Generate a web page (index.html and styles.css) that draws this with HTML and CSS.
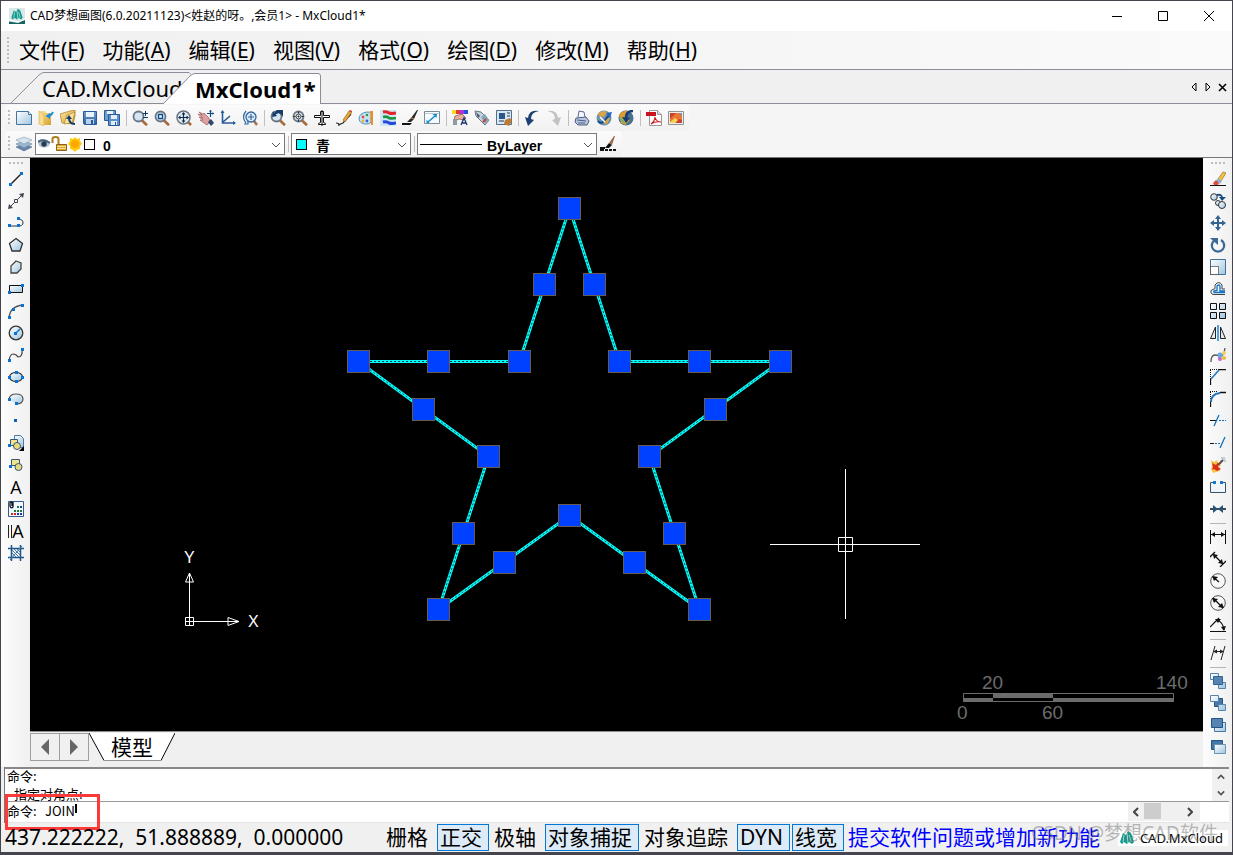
FILE: index.html
```html
<!DOCTYPE html>
<html lang="zh-CN">
<head>
<meta charset="utf-8">
<title>CAD梦想画图 - MxCloud1*</title>
<link rel="stylesheet" href="styles.css">
</head>
<body>
<svg class="defs" aria-hidden="true">
  <defs>
    <linearGradient id="ice" x1="0" y1="0" x2="1" y2="1"><stop offset="0" stop-color="#fff"/><stop offset="1" stop-color="#9fc6e0"/></linearGradient>
    <linearGradient id="gold" x1="0" y1="0" x2="1" y2="1"><stop offset="0" stop-color="#fbe6a0"/><stop offset="1" stop-color="#d9a028"/></linearGradient>
    <linearGradient id="steel" x1="0" y1="0" x2="0" y2="1"><stop offset="0" stop-color="#6f9fd0"/><stop offset="1" stop-color="#2f5f9c"/></linearGradient>
    <symbol id="lens" viewBox="0 0 16 16"><path d="M9.500 10 15 15.200" stroke="#a86a3a" stroke-width="2.600"/><circle cx="6.500" cy="6.500" r="5" fill="#d5e4f0" stroke="#6b7784" stroke-width="1.800"/></symbol>
    <symbol id="logo" viewBox="0 0 16 16"><path d="M1 12 4 3l3 2 2-4 3 2 3 9-2 2-3-2-2 2-3-2-2 2z" fill="#13988c"/><path d="m5 5-1 7m4-9 1 10m1-8 2 7" stroke="#a8ded6" stroke-width="1"/></symbol>
  </defs>
</svg>
<div class="window">
  <header class="titlebar">
    <svg class="app-icon" viewBox="0 0 16 16"><rect width="16" height="16" rx="1" fill="#d9e8e8"/><use href="#logo" width="16" height="13"/><path d="M0 13.500 9 15l7-3v4H0z" fill="#16635f"/><path d="M0 12 9 14l7-3" stroke="#fff" fill="none"/></svg>
    <h1 class="title">CAD梦想画图(6.0.20211123)&lt;姓赵的呀。,会员1&gt; - MxCloud1*</h1>
    <button class="win-btn" aria-label="最小化"><svg viewBox="0 0 12 12"><path d="M1 6.500h10"/></svg></button>
    <button class="win-btn" aria-label="最大化"><svg viewBox="0 0 12 12"><path d="M1.500 1.500h9v9h-9z"/></svg></button>
    <button class="win-btn" aria-label="关闭"><svg viewBox="0 0 12 12"><path d="m1 1 10 10M11 1 1 11"/></svg></button>
  </header>

  <nav class="menubar">
    <span class="grip tall"></span>
    <button>文件(<u>F</u>)</button><button>功能(<u>A</u>)</button><button>编辑(<u>E</u>)</button><button>视图(<u>V</u>)</button><button>格式(<u>O</u>)</button><button>绘图(<u>D</u>)</button><button>修改(<u>M</u>)</button><button>帮助(<u>H</u>)</button>
  </nav>

  <div class="doc-tabs">
    <button class="doc-tab"><svg viewBox="0 0 180 31" preserveAspectRatio="none"><path d="M0 31 28 3q3-2.500 5-2.500h145l2 2"/></svg><span>CAD.MxCloud</span></button>
    <button class="doc-tab active"><svg viewBox="0 0 158 31" preserveAspectRatio="none"><path d="M0 31 27 3q3-2.500 5-2.500h123q2.500 0 2.500 2.500v28" fill="#fff"/></svg><span>MxCloud1*</span></button>
    <span class="tab-line"></span>
    <button class="tab-ctl" aria-label="上一个"><svg viewBox="0 0 10 10"><path d="M7 1v8L3 5z" fill="none" stroke="#000"/></svg></button>
    <button class="tab-ctl" aria-label="下一个"><svg viewBox="0 0 10 10"><path d="M3 1v8l4-4z" fill="none" stroke="#000"/></svg></button>
    <button class="tab-ctl" aria-label="关闭标签"><svg viewBox="0 0 10 10"><path d="m2 2 7 7M9 2 2 9" stroke="#000" stroke-width="1.600"/></svg></button>
  </div>

  <div class="bars">
    <div class="toolbar">
      <span class="grip"></span>
      <button class="tool" aria-label="新建"><svg viewBox="0 0 16 16"><path d="M.5 1.500h12l3 3v10H.5z" fill="url(#ice)" stroke="#41749f"/><path d="M12.500 1.500v3h3" fill="#fff" stroke="#41749f"/></svg></button>
      <button class="tool" aria-label="打开"><svg viewBox="0 0 16 16"><path d="M1 1h6l1 2h5v12H3z" fill="url(#gold)"/><path d="m1 1 5 4v11l-5-2z" fill="#f6dc8c" stroke="#d6b050" stroke-width=".6"/><path d="M15 2q-2 4-5 4" stroke="#1d90d8" stroke-width="2" fill="none"/><path d="M7.500 6 12 3v6z" fill="#1d90d8"/></svg></button>
      <button class="tool" aria-label="打开云图"><svg viewBox="0 0 16 16"><path d="m0 4 10-3 5-1v6l-2 8-11-1z" fill="url(#gold)" stroke="#a87820" stroke-width=".7"/><path d="M4 14 7 5l8-3-3 11z" fill="#f8e29a" stroke="#a87820" stroke-width=".6"/><path d="M15 14q-6 0-6-6" fill="none" stroke="#123d70" stroke-width="2"/><path d="m6 9 3-4 3 4z" fill="#123d70"/></svg></button>
      <button class="tool" aria-label="保存"><svg viewBox="0 0 16 16"><path d="M1.500 1.500h13v13h-12l-1-1z" fill="url(#steel)" stroke="#28599a"/><path d="M4 2h8v5H4z" fill="#e8f2fa"/><path d="M4 9h8v5H4z" fill="#b8d4ec"/><path d="M9 10h2v4H9z" fill="#28599a"/></svg></button>
      <button class="tool" aria-label="另存为"><svg viewBox="0 0 16 16"><path d="M.5.5h11v10H.5z" fill="#6f9fd0" stroke="#28599a"/><path d="M3 1h6v3H3z" fill="#e8f2fa"/><path d="M4.500 4.500h11v11h-11z" fill="#5f90c8" stroke="#28599a"/><path d="M7 5h6v4H7zm0 6h6v4H7z" fill="#e0eefa"/><path d="M11 12h1v3h-1z" fill="#28599a"/></svg></button>
      <span class="sep"></span>
      <button class="tool" aria-label="缩放"><svg viewBox="0 0 16 16"><use href="#lens"/><path d="M11 3.500h5M13.500 1v5M11 7.500h5" stroke="#0c3c6c"/></svg></button>
      <button class="tool" aria-label="窗口缩放"><svg viewBox="0 0 16 16"><use href="#lens"/><path d="M4.500 4.500h4v4h-4z" fill="#eaf5ff" stroke="#0d4a88" stroke-width="1.300"/></svg></button>
      <button class="tool" aria-label="全部缩放"><svg viewBox="0 0 16 16"><path d="m12 12 3 3" stroke="#a86a3a" stroke-width="2.600"/><circle cx="7.500" cy="7.500" r="6.500" fill="#e6eef4" stroke="#6c7580" stroke-width="1.500"/><path d="M7.500 3v9M3 7.500h9" stroke="#0c2c50" stroke-width="1.200"/><path d="m7.500 2 2 2.500h-4zM7.500 13l2-2.500h-4zM2 7.500l2.500-2v4zm11 0-2.500-2v4z" fill="#0c2c50"/></svg></button>
      <button class="tool" aria-label="平移"><svg viewBox="0 0 16 16"><path d="m1 2 4 2 1-1 5 5 1 4-3 3-3-2-4-3 3 0-4-3 4 1-5-4 4 1z" fill="#dda0a0" stroke="#9c5c60" stroke-width=".7"/><path d="m10 12 3-3 3 4-3 3z" fill="#30476a"/><path d="M12.500 0v7M9 3.500h7" stroke="#174a80" stroke-width="1.200"/><path d="m12.500 0 1.500 1.500h-3zM16 3.500 14.500 5V2z" fill="#174a80"/></svg></button>
      <button class="tool" aria-label="坐标"><svg viewBox="0 0 16 16"><path d="M2.500 1v12H15M3 12l7-6" fill="none" stroke="#2a5c98" stroke-width="1.600"/><path d="m2.500 0 2 3h-4zM16 13l-3-2v4z" fill="#2a5c98"/></svg></button>
      <button class="tool" aria-label="动态缩放"><svg viewBox="0 0 16 16"><path d="m12 11 3 4" stroke="#a86a3a" stroke-width="2.400"/><circle cx="9" cy="7" r="5" fill="#d8ecfa" stroke="#31679f" stroke-width="1.300"/><path d="M4 1Q-1 7 4 13M2 14h4v-3M9 4v6M6 7h6" fill="none" stroke="#31679f" stroke-width="1.200"/></svg></button>
      <span class="sep"></span>
      <button class="tool" aria-label="上一视图"><svg viewBox="0 0 16 16"><use href="#lens"/><path d="M4 6q5-6 9 1v-7q-5-2-8 2" fill="#173c6c"/><path d="m2 7 1-6 4 5z" fill="#173c6c"/></svg></button>
      <button class="tool" aria-label="范围缩放"><svg viewBox="0 0 16 16"><use href="#lens"/><circle cx="6.500" cy="6.500" r="2.500" fill="#eee" stroke="#444"/><path d="M6 6h1v1H6zM1.500 6.500h2m6 0h2m-5-5v2m0 6v2" fill="#111" stroke="#222"/></svg></button>
      <button class="tool" aria-label="捕捉"><svg viewBox="0 0 16 16"><path d="M6.500 1.500h3v4h6v2h-6v5l2 1v1h-7v-1l2-1v-5h-6v-2h6z" fill="#fff" stroke="#111"/><path d="M8 0v16" stroke="#111"/></svg></button>
      <button class="tool" aria-label="画笔"><svg viewBox="0 0 16 16"><path d="M0 13q3 0 3 2 1-1 4-2l8-9" fill="none" stroke="#222" stroke-width="1.200"/><path d="m7 10 6-9 3 1-7 10z" fill="#e9a43a" stroke="#8c5a14" stroke-width=".6"/><path d="m13 1 1-1 2 1v1z" fill="#c9302c"/></svg></button>
      <button class="tool" aria-label="调色板"><svg viewBox="0 0 16 16"><path d="M1 9q0-6 8-7 6 0 5 4-2 1-1 4 1 4-5 4-6 0-7-5z" fill="#c6e3f4" stroke="#4c93bf"/><circle cx="5" cy="7" r="1.400" fill="#e34b3e"/><circle cx="9" cy="5" r="1.300" fill="#2b9b42"/><circle cx="5" cy="11" r="1.400" fill="#e7b52d"/><circle cx="9" cy="11" r="1.400" fill="#3c5ecc"/><path d="M12 1h3v14h-2z" fill="#e69130"/></svg></button>
      <button class="tool" aria-label="线型颜色"><svg viewBox="0 0 16 16"><path d="M0 0h16v16H0z" fill="#cfe6f3"/><path d="M3 2q4-1 6 1 3 1 7 0" stroke="#e3222e" stroke-width="3" fill="none"/><path d="M3 7q4-1 6 1 3 1 7 0" stroke="#18933e" stroke-width="2.600" fill="none"/><path d="M3 12q4-1 6 1 3 1 7 0" stroke="#2448d8" stroke-width="3" fill="none"/></svg></button>
      <button class="tool" aria-label="线宽"><svg viewBox="0 0 16 16"><path d="M0 13h10l-2 2H0z" fill="#111"/><path d="m5 12 4-4 6-8h1l-4 9-3 3z" fill="#2b2929"/><path d="m9 8 3 1" stroke="#c48a58"/></svg></button>
      <button class="tool" aria-label="全屏"><svg viewBox="0 0 16 16"><path d="M.5 1.500h15v12H.5z" fill="#f5fbff" stroke="#7b8c98"/><path d="M1 3.500h14" stroke="#c0ccd4"/><path d="m4 12 7-6" stroke="#168bd0" stroke-width="1.600"/><path d="m13 4-.5 4-4-4zM2.500 13V9.500l3 3.500z" fill="#168bd0"/></svg></button>
      <span class="sep"></span>
      <button class="tool" aria-label="特性"><svg viewBox="0 0 16 16"><path d="M0 0h4v4H0z" fill="#f4dc27"/><path d="M4 0h4v4H4z" fill="#e63346"/><path d="M8 0h4v4H8z" fill="#a937d0"/><path d="M12 0h4v4h-4z" fill="#2850e0"/><path d="m3 6 7-2 4 4-2 2-5-1-5 2z" fill="#e9ae9c" stroke="#7c4544" stroke-width=".7"/><path d="M1 9h4v6H1z" fill="#8e99a6"/><path d="m9 15 3-7 3 7m-5-2h4" fill="none" stroke="#1b356c" stroke-width="1.300"/></svg></button>
      <button class="tool" aria-label="标记"><svg viewBox="0 0 16 16"><path d="m1 1 6 1 8 8-4 5-9-9z" fill="#c6d5df" stroke="#687783"/><path d="m2 2 4 4-2 2z" fill="#3f4f5e"/><path d="m7 7 4-3 4 6-4 4z" fill="#87a4b9"/><path d="m9 12 3-3" stroke="#ca423a" stroke-width="2"/></svg></button>
      <button class="tool" aria-label="格式刷"><svg viewBox="0 0 16 16"><path d="M.5.5h15v14H.5z" fill="#dae6ef" stroke="#526f8c"/><path d="M3 3h6v6H3z" fill="#285789"/><path d="M11 3h3M11 6h3M3 11h5" stroke="#243a58"/><path d="m9 10 5-2 2 3-3 5-5-2z" fill="#bd7a35"/></svg></button>
      <span class="sep"></span>
      <button class="tool" aria-label="撤销"><svg viewBox="0 0 16 16"><path d="M15 1Q5-1 4 8L1 7l3 9 6-6-3-1q0-7 8-8z" fill="#1a4074"/></svg></button>
      <button class="tool" aria-label="重做"><svg viewBox="0 0 16 16"><path d="M1 1q10-2 11 7l3-1-3 9-6-6 3-1Q9 2 1 1z" fill="#c0c3c6"/></svg></button>
      <span class="sep"></span>
      <button class="tool" aria-label="打印"><svg viewBox="0 0 16 16"><path d="m4 7 1-6 5 1 1 5" fill="#f4f6ff" stroke="#586a96"/><path d="m2 8 10-1 3 4-2 4H4l-3-3z" fill="#bac6df" stroke="#4c5c83"/><path d="m3 10 9 1m-8 2h7" stroke="#4c5c83"/></svg></button>
      <button class="tool" aria-label="网络上传"><svg viewBox="0 0 16 16"><circle cx="8" cy="8" r="7.500" fill="#6c92ad"/><path d="M2 4q5-5 9-2L8 7 3 6zm6 5 6-1-3 6-4-1z" fill="#dca443"/><path d="M2 11q3 4 7-1l5-6" stroke="#104a94" stroke-width="2" fill="none"/><path d="m10 3 6-1-2 6z" fill="#246ac0"/><path d="m4 7 5 5" stroke="#fff" stroke-width="1.500"/></svg></button>
      <button class="tool" aria-label="网络下载"><svg viewBox="0 0 16 16"><circle cx="8" cy="8" r="7.500" fill="#46718f"/><path d="M1 5q4-5 9-4L7 7l5 3-5 5-4-2z" fill="#df9b2d"/><path d="M15 1Q8 1 8 8" stroke="#143e75" stroke-width="2.500" fill="none"/><path d="m4 7 8 1-4 5z" fill="#143e75"/><path d="m2 8 5 5" stroke="#76b17c" stroke-width="2"/></svg></button>
      <span class="sep"></span>
      <button class="tool" aria-label="导出PDF"><svg viewBox="0 0 16 16"><path d="M3.500.5h8l4 4v11h-12z" fill="#fff" stroke="#999"/><path d="M11.500.5v4h4" fill="#ddd" stroke="#999"/><path d="M0 2h10v4H0z" fill="#c8141c"/><path d="M5 14q4-3 4-7 1 5 6 5-6-1-10 2z" fill="none" stroke="#d31920" stroke-width="1.200"/></svg></button>
      <button class="tool" aria-label="导出图片"><svg viewBox="0 0 16 16"><path d="M.5 1.500h15v13H.5z" fill="#eee" stroke="#929292"/><path d="M2 3h12v10H2z" fill="#e97632"/><path d="m2 9 6-6H2zm6 4 2-4 4 1v3z" fill="#c44331"/><path d="m2 12 5-4 3 2-3 3H2z" fill="#f6d25b"/><path d="M11 3h3v3z" fill="#6695d1"/></svg></button>
    </div>
    <div class="toolbar">
      <span class="grip"></span>
      <button class="tool" aria-label="图层"><svg viewBox="0 0 16 16"><path d="m0 11 8-3 8 3-8 4z" fill="#6687ad" stroke="#415f83" stroke-width=".5"/><path d="m0 8 8-3 8 3-8 4z" fill="#9db7d0" stroke="#55708d" stroke-width=".5"/><path d="m0 4 8-3 8 3-8 4z" fill="#d7e4ef" stroke="#6e8aa7" stroke-width=".5"/></svg></button>
      <div class="combo layer">
        <span class="combo-icons"><svg viewBox="0 0 52 16" width="52" height="16"><path d="M0 5q5-5 12 1l-1 4q-5 3-10 0z" fill="#b4c2d0"/><path d="M0 6q5-4 12 1" fill="none" stroke="#47617a" stroke-width="2"/><circle cx="6" cy="8" r="2.700" fill="#263c52"/><path d="M14.500 7V3q0-2 3-2t3 2v5" fill="none" stroke="#ae7b1d" stroke-width="2"/><path d="M18.500 8.500h10v6h-10z" fill="#e1a833" stroke="#8a6116"/><path d="M19 10.500h9M19 12.500h9" stroke="#fae095"/><path d="m37 1 2 2 3-1v3l2 3-2 2v3l-3 1-2 2-2-2-3-1v-3l-2-2 2-3V2l3 1z" fill="#ffcc12"/><circle cx="37" cy="8" r="4.300" fill="#ffa800"/></svg><i class="swatch"></i></span>
        <select aria-label="图层"><option>0</option></select>
        <svg class="chev" viewBox="0 0 10 6"><path d="m1 1 4 4 4-4"/></svg>
      </div>
      <span class="sep"></span>
      <div class="combo color">
        <span class="combo-icons"><i class="swatch cyan"></i></span>
        <select aria-label="颜色"><option>青</option></select>
        <svg class="chev" viewBox="0 0 10 6"><path d="m1 1 4 4 4-4"/></svg>
      </div>
      <span class="sep"></span>
      <div class="combo line">
        <span class="combo-icons"><i class="sample"></i></span>
        <select aria-label="线型"><option>ByLayer</option></select>
        <svg class="chev" viewBox="0 0 10 6"><path d="m1 1 4 4 4-4"/></svg>
      </div>
      <button class="tool" aria-label="线型管理"><svg viewBox="0 0 16 16"><path d="M0 14h4m1 0h3m1 0h3m1 0h3M0 12h5" stroke="#111" stroke-width="2"/><path d="m5 12 4-5 3 2-3 3z" fill="#111"/><path d="m9 7 5-7h1l-3 9z" fill="#9c6a48"/></svg></button>
    </div>
  </div>

  <main class="workspace">
    <div class="sidebar">
      <span class="grip flat"></span>
      <button class="tool" aria-label="直线"><svg viewBox="0 0 16 16"><path d="M2 14 14 2" stroke="#222" stroke-width="1.500"/><path d="M1 12h3v3H1zM12 1h3v3h-3z" fill="#0a72d0"/></svg></button>
      <button class="tool" aria-label="构造线"><svg viewBox="0 0 16 16"><path d="M2 14 14 2" stroke="#444"/><path d="m16 0-5 1 4 4zM0 16l5-1-4-4z" fill="#445"/><path d="M6.500 6.500h3v3h-3z" fill="#fff" stroke="#445"/></svg></button>
      <button class="tool" aria-label="多段线"><svg viewBox="0 0 16 16"><path d="M1 11h9M10 4q5 0 5 4 0 3-5 3" fill="none" stroke="#333"/><path d="M0 9h3v3H0zM9 9h3v3H9zM9 2h3v3H9z" fill="#0a72d0"/></svg></button>
      <button class="tool" aria-label="正多边形"><svg viewBox="0 0 16 16"><path d="m8 1.500 6.500 5-2.500 7.500H4L1.500 6.500z" fill="url(#ice)" stroke="#333" stroke-width="1.300"/></svg></button>
      <button class="tool" aria-label="多边形"><svg viewBox="0 0 16 16"><path d="m8 2 5 2v6l-4 4H3V7z" fill="url(#ice)" stroke="#444" stroke-width="1.300"/></svg></button>
      <button class="tool" aria-label="矩形"><svg viewBox="0 0 16 16"><path d="M1.500 4.500h13v7h-13z" fill="url(#ice)" stroke="#111"/><path d="M0 10h3v3H0zM13 3h3v3h-3z" fill="#0a72d0"/></svg></button>
      <button class="tool" aria-label="圆弧"><svg viewBox="0 0 16 16"><path d="M1 15Q2 3 15 2" fill="none" stroke="#555" stroke-width="1.300"/><path d="M0 13h3v3H0zM4 5h3v3H4zM13 1h3v3h-3z" fill="#0a72d0"/></svg></button>
      <button class="tool" aria-label="圆"><svg viewBox="0 0 16 16"><circle cx="8" cy="8" r="6.800" fill="url(#ice)" stroke="#333" stroke-width="1.300"/><path d="m8 8 4-4" stroke="#0a72d0" stroke-width="1.500"/><path d="M6 7h3v3H6z" fill="#0a72d0"/></svg></button>
      <button class="tool" aria-label="样条曲线"><svg viewBox="0 0 16 16"><path d="M1 14Q2 7 5 7t5 3q5 0 4-8" fill="none" stroke="#444" stroke-width="1.200"/><path d="M0 12h3v3H0zM13 1h3v3h-3z" fill="#0a72d0"/></svg></button>
      <button class="tool" aria-label="椭圆"><svg viewBox="0 0 16 16"><ellipse cx="8" cy="8" rx="6.500" ry="4.500" fill="url(#ice)" stroke="#333" stroke-width="1.200"/><path d="M0 7h3v3H0zM13 7h3v3h-3zM7 2h3v3H7zM7 11h3v3H7z" fill="#0a72d0"/></svg></button>
      <button class="tool" aria-label="椭圆弧"><svg viewBox="0 0 16 16"><path d="M1 8q1-5 7-5 7 0 7 5t-7 5" fill="url(#ice)" stroke="#555" stroke-width="1.200"/><path d="M0 7h3v3H0zM7 11h3v3H7z" fill="#0a72d0"/></svg></button>
      <button class="tool" aria-label="点"><svg viewBox="0 0 16 16"><path d="M6 6h3v3H6z" fill="#0a62b0"/></svg></button>
      <button class="tool" aria-label="插入块"><svg viewBox="0 0 16 16"><path d="M6.500.5h6l3 3v9h-9z" fill="url(#ice)" stroke="#4d7ba4"/><path d="M2.500 4.500h7v6h-7z" fill="#f3e389" stroke="#31587f"/><circle cx="9" cy="11" r="3.500" fill="#eadc78" stroke="#31587f"/><path d="M0 9h3v3H0z" fill="#0a72d0"/><path d="M16 11v5h-5z" fill="#000"/></svg></button>
      <button class="tool" aria-label="创建块"><svg viewBox="0 0 16 16"><path d="M3.500 2.500h8v6h-8z" fill="#f3e389" stroke="#31587f"/><circle cx="10.500" cy="10" r="3.500" fill="#e7db79" stroke="#31587f"/><path d="M1 8h3v3H1z" fill="#0a72d0"/></svg></button>
      <button class="tool letter" aria-label="文字">A</button>
      <button class="tool" aria-label="图案填充"><svg viewBox="0 0 16 16"><path d="M.5.5h15v15H.5z" fill="#f2f8ff" stroke="#315e91"/><path d="M6 9h2v2H6zM9 5h2v2H9zM9 9h2v2H9zM12 9h2v2h-2z" fill="#217b38"/><path d="M3 12h2v2H3zM6 12h2v2H6z" fill="#cf2427"/><path d="M9 12h2v2H9zM12 12h2v2h-2zM12 5h2v2h-2z" fill="#2436a5"/><path d="M5 1v5q-2 2-3-1V2q1-2 2 0v3" fill="none" stroke="#111" stroke-width="1.300"/></svg></button>
      <button class="tool letter barred" aria-label="单行文字"><i class="textbars"></i>A</button>
      <button class="tool" aria-label="面域"><svg viewBox="0 0 16 16"><path d="M3.500 0v16M12.500 0v16M0 3.500h16M0 12.500h16" stroke="#225688" stroke-width="1.500"/><path d="m4 5 7 7M6 4l6 6M4 8l4 4M9 4l3 3M2 15 14 1" stroke="#3e79ad"/></svg></button>
    </div>

    <section class="center">
      <svg class="canvas" viewBox="30 158 1173 573" role="img" aria-label="五角星图形">
        <path class="star" d="M569.500 208.500 619.500 361.500H780.500L649.500 456.500 699.500 609.500 569.500 515.500 438.500 609.500 488.500 456.500 358.500 361.500H519.500Z"/>
        <path class="star-dots" d="M569.500 208.500 619.500 361.500H780.500L649.500 456.500 699.500 609.500 569.500 515.500 438.500 609.500 488.500 456.500 358.500 361.500H519.500Z"/>
        <g class="handles">
          <rect x="558.500" y="197.500" width="22" height="22"/><rect x="533.500" y="273.500" width="22" height="22"/><rect x="583.500" y="273.500" width="22" height="22"/>
          <rect x="347.500" y="350.500" width="22" height="22"/><rect x="427.500" y="350.500" width="22" height="22"/><rect x="508.500" y="350.500" width="22" height="22"/>
          <rect x="608.500" y="350.500" width="22" height="22"/><rect x="688.500" y="350.500" width="22" height="22"/><rect x="769.500" y="350.500" width="22" height="22"/>
          <rect x="412.500" y="398.500" width="22" height="22"/><rect x="704.500" y="398.500" width="22" height="22"/><rect x="477.500" y="445.500" width="22" height="22"/><rect x="638.500" y="445.500" width="22" height="22"/>
          <rect x="452.500" y="522.500" width="22" height="22"/><rect x="663.500" y="522.500" width="22" height="22"/><rect x="558.500" y="504.500" width="22" height="22"/>
          <rect x="493.500" y="551.500" width="22" height="22"/><rect x="623.500" y="551.500" width="22" height="22"/><rect x="427.500" y="598.500" width="22" height="22"/><rect x="688.500" y="598.500" width="22" height="22"/>
        </g>
        <path class="thin" d="M845.500 469v150M770 544.500h150M838.500 537.500h14v14h-14zM189.500 573v53M185 621.500h54M185.500 617.500h8v8h-8zM189.500 573l-4 9h8zM239 621.500l-11-4v8z"/>
        <text class="axis" x="184" y="563">Y</text><text class="axis" x="248" y="627">X</text>
        <g class="scale"><path d="M963.500 693.500h210v8h-210z" fill="none" stroke="#6c6c6c"/><path d="M993 693h60v5h-60zM963 698h30v4h-30zM1053 698h121v4h-121z"/>
        <text x="982" y="689">20</text><text x="1156" y="689">140</text><text x="957" y="719">0</text><text x="1042" y="719">60</text></g>
      </svg>
      <div class="sheet-tabs">
        <button class="nav" aria-label="上一页"><svg viewBox="0 0 10 16"><path d="M9 0v16L1 8z"/></svg></button>
        <button class="nav" aria-label="下一页"><svg viewBox="0 0 10 16"><path d="M1 0v16l8-8z"/></svg></button>
        <button class="sheet"><svg viewBox="0 0 86 29" preserveAspectRatio="none"><path d="m0 0 15 28.500h57L86 0" fill="#fff" stroke="#000"/><path d="M15 28.500h57" stroke="#999"/></svg><span>模型</span></button>
      </div>
    </section>

    <div class="sidebar right">
      <span class="grip flat"></span>
      <button class="tool" aria-label="删除"><svg viewBox="0 0 16 16"><path d="M0 14.500h16" stroke="#111"/><path d="m8 8 5-7 3 1-5 8z" fill="#f5c33d" stroke="#846018" stroke-width=".6"/><path d="m6 10 2-3 4 3-2 3z" fill="#8fb4d0"/><path d="m3 12 3-3 3 3-1 2H4z" fill="#df4a42"/></svg></button>
      <button class="tool" aria-label="复制"><svg viewBox="0 0 16 16"><circle cx="4" cy="4" r="3.300" fill="url(#ice)" stroke="#333"/><circle cx="8" cy="10" r="2.500" fill="url(#ice)" stroke="#333"/><circle cx="12" cy="12" r="3.500" fill="url(#ice)" stroke="#333"/><path d="M7 2q5-1 5 3" fill="none" stroke="#174f85" stroke-width="2"/><path d="M9 4h7l-4 4z" fill="#174f85"/></svg></button>
      <button class="tool" aria-label="移动"><svg viewBox="0 0 16 16"><path d="M8 2v12M2 8h12" stroke="#346592" stroke-width="2"/><path d="m8 0 3 4H5zM8 16l3-4H5zM0 8l4-3v6zm16 0-4-3v6z" fill="#346592"/></svg></button>
      <button class="tool" aria-label="旋转"><svg viewBox="0 0 16 16"><path d="M5 3a6.200 6.200 0 1 0 6 0" fill="none" stroke="#3d6996" stroke-width="2.300"/><path d="M0 1h8v7z" fill="#3d6996"/></svg></button>
      <button class="tool" aria-label="缩放对象"><svg viewBox="0 0 16 16"><path d="M.5 6V.5h15v15H.5z" fill="url(#ice)" stroke="#407399"/><path d="M.5 7.500h8v8h-8z" fill="#fff" stroke="#111" stroke-dasharray="1 1"/></svg></button>
      <button class="tool" aria-label="偏移"><svg viewBox="0 0 16 16"><path d="M15 13.500H3q-3-1-2-4l4-2V4q4-5 7 0v4h3" fill="none" stroke="#444"/><path d="M15 11.500H4q-1-2 2-2h1V5q2-2 3 0v5h5" fill="none" stroke="#1974c8" stroke-width="1.300"/></svg></button>
      <button class="tool" aria-label="阵列"><svg viewBox="0 0 16 16"><path d="M.5.500h6v6h-6zM9.500.500h6v6h-6zM.5 9.500h6v6h-6zM9.500 9.500h6v6h-6z" fill="url(#ice)" stroke="#111"/></svg></button>
      <button class="tool" aria-label="镜像"><svg viewBox="0 0 16 16"><path d="M5.500 2v11.500h-5zM10.500 2v11.500h5z" fill="#e3ebf0" stroke="#222"/><path d="M8 0v16" stroke="#1684dd" stroke-width="1.500"/></svg></button>
      <button class="tool" aria-label="编辑曲线"><svg viewBox="0 0 16 16"><path d="M1 15q0-7 4-7t4 2q5 0 6-9" fill="none" stroke="#555" stroke-width="1.300"/><circle cx="10" cy="8" r="2.500" fill="#6aa8e0"/><circle cx="10" cy="12" r="2" fill="#bf6ad0"/><circle cx="14" cy="11" r="2" fill="#ebbd3c"/><circle cx="14" cy="6" r="2" fill="#f2ce69"/></svg></button>
      <button class="tool" aria-label="倒角"><svg viewBox="0 0 16 16"><path d="M0 .500h8M.5 1v9" stroke="#111" stroke-dasharray="1 1"/><path d="M8 .500h8M.5 10v6" stroke="#111" stroke-width="1.300"/><path d="m1 10 8-9" stroke="#2274bd" stroke-width="1.500"/></svg></button>
      <button class="tool" aria-label="圆角"><svg viewBox="0 0 16 16"><path d="M0 .500h8M.5 1v8" stroke="#111" stroke-dasharray="1 1"/><path d="M10 1.500h6M.5 10v6" stroke="#111" stroke-width="1.300"/><path d="M1 11q0-8 9-9" fill="none" stroke="#2274bd" stroke-width="2"/></svg></button>
      <button class="tool" aria-label="修剪"><svg viewBox="0 0 16 16"><path d="M0 7.500h6" stroke="#111"/><path d="M9 7.500h7" stroke="#1470b7" stroke-dasharray="2 1"/><path d="m4 13 5-11" stroke="#1470b7" stroke-width="1.300"/></svg></button>
      <button class="tool" aria-label="延伸"><svg viewBox="0 0 16 16"><path d="M0 8.500h4" stroke="#111"/><path d="M5 8.500h6" stroke="#1470b7" stroke-dasharray="2 1"/><path d="m10 13 5-11" stroke="#1470b7" stroke-width="1.300"/></svg></button>
      <button class="tool" aria-label="分解"><svg viewBox="0 0 16 16"><path d="m1 3 3 2 3-2 1 4 3 1-2 3 1 3-4 1-3 1-2-4 1-3z" fill="#f8c542"/><path d="m2 6 4 2 2-3v5l3 2-4 2-3-2-2 1 1-3z" fill="#dc2b23"/><path d="m8 8 5-5" stroke="#634139" stroke-width="2"/><path d="M11 1h2m1 3h2M10 4h1m3-4v3" stroke="#8fa9bd"/></svg></button>
      <button class="tool" aria-label="打断"><svg viewBox="0 0 16 16"><path d="M4 3.500H.5v10h15v-10H12" fill="#f0f5f9" stroke="#3b536a"/><path d="M3 2h3v3H3zM10 2h3v3h-3z" fill="#127bce"/></svg></button>
      <button class="tool" aria-label="合并"><svg viewBox="0 0 16 16"><path d="M0 8h16" stroke="#111" stroke-width="1.500"/><path d="m3 4 5 4-5 4zM13 4 8 8l5 4z" fill="#24547d"/></svg></button>
      <span class="sep"></span>
      <button class="tool" aria-label="线性标注"><svg viewBox="0 0 16 16"><path d="M.5 1v14M15.500 1v14M1 5.500h14" stroke="#111"/><path d="m1 5.500 4-2.500v5zm14 0-4-2.500v5z" fill="#111"/></svg></button>
      <button class="tool" aria-label="对齐标注"><svg viewBox="0 0 16 16"><path d="m3 3 10 10M0 6l5-5M10 16l6-6" stroke="#111" stroke-width="1.300"/><path d="m3 3 5 1-4 4zM13 13l-5-1 4-4z" fill="#111"/></svg></button>
      <button class="tool" aria-label="半径标注"><svg viewBox="0 0 16 16"><circle cx="8" cy="8" r="7.300" fill="#f8f8f8" stroke="#555"/><path d="m3 4 6 5" stroke="#111" stroke-width="1.300"/><path d="m2 3 6 1-4 4z" fill="#111"/></svg></button>
      <button class="tool" aria-label="直径标注"><svg viewBox="0 0 16 16"><circle cx="8" cy="8" r="7.300" fill="#f8f8f8" stroke="#555"/><path d="m3 3 10 10" stroke="#111" stroke-width="1.300"/><path d="m2 3 6 1-4 4zM14 13l-6-1 4-4z" fill="#111"/></svg></button>
      <button class="tool" aria-label="角度标注"><svg viewBox="0 0 16 16"><path d="M0 14.500h16M0 10l9-9M7 3q6 2 7 10" fill="none" stroke="#111" stroke-width="1.200"/><path d="m5 2 6 0-3 4zM14 14l-3-4 5-1z" fill="#111"/></svg></button>
      <span class="sep"></span>
      <button class="tool" aria-label="编辑标注"><svg viewBox="0 0 16 16"><path d="M1 15 5 1M11 15l4-14M4 6.500h9" stroke="#222"/><path d="m3 6.500 4-2v4zm11 0-4-2v4z" fill="#222"/></svg></button>
      <span class="sep"></span>
      <button class="tool" aria-label="前置"><svg viewBox="0 0 16 16"><path d="M.5.500h8v6h-8zM8.500 9.500h7v6h-7z" fill="url(#ice)" stroke="#5684ac"/><path d="M3.500 3.500h9v8h-9z" fill="#5584b2" stroke="#346592"/></svg></button>
      <button class="tool" aria-label="后置"><svg viewBox="0 0 16 16"><path d="M4.500 3.500h8v8h-8z" fill="#4577a9" stroke="#245483"/><path d="M.5.500h8v6h-8zM8.500 9.500h7v6h-7z" fill="url(#ice)" stroke="#5684ac"/></svg></button>
      <button class="tool" aria-label="置于对象之上"><svg viewBox="0 0 16 16"><path d="M4.500 5.500h11v9h-11z" fill="url(#ice)" stroke="#4577a1"/><path d="M1.500 1.500h11v9h-11z" fill="#5584b2" stroke="#245483"/></svg></button>
      <button class="tool" aria-label="置于对象之下"><svg viewBox="0 0 16 16"><path d="M1.500 1.500h11v9h-11z" fill="#4577a9" stroke="#245483"/><path d="M4.500 5.500h11v9h-11z" fill="url(#ice)" stroke="#6b92af"/></svg></button>
    </div>
  </main>

  <section class="command">
    <div class="history">
      <div class="log"><p>命令:</p><p class="indent">指定对角点:</p></div>
      <div class="vscroll"><button aria-label="向上滚动"><svg viewBox="0 0 10 6"><path d="m1 5 4-4 4 4"/></svg></button><button aria-label="向下滚动"><svg viewBox="0 0 10 6"><path d="m1 1 4 4 4-4"/></svg></button></div>
    </div>
    <div class="prompt">
      <label for="cmd">命令:</label>
      <input id="cmd" class="cmd" value="JOIN">
      <i class="caret"></i>
      <div class="hscroll"><button aria-label="向左滚动"><svg viewBox="0 0 6 10"><path d="M5 1 1 5l4 4"/></svg></button><i class="thumb"></i><button aria-label="向右滚动"><svg viewBox="0 0 6 10"><path d="m1 1 4 4-4 4"/></svg></button></div>
      <i class="marker"></i>
    </div>
  </section>

  <footer class="status">
    <output class="coords">437.222222,&nbsp; 51.888889,&nbsp; 0.000000</output>
    <button>栅格</button><button class="on">正交</button><button>极轴</button><button class="on">对象捕捉</button><button>对象追踪</button><button class="on">DYN</button><button class="on">线宽</button>
    <a class="feedback" href="#feedback">提交软件问题或增加新功能</a>
    <span class="brand"><svg viewBox="0 0 16 16"><use href="#logo"/></svg>CAD.MxCloud</span>
    <span class="watermark">CSDN @梦想CAD软件</span>
  </footer>
</div>
</body>
</html>
```
FILE: styles.css
```css
* { box-sizing: border-box; }
body {
  margin: 0;
  background: #3c4450;
  color: #000;
  font-family: "Noto Sans", "Noto Sans CJK SC", sans-serif;
}
button {
  margin: 0;
  padding: 0;
  border: 0;
  background: none;
  color: inherit;
  font: inherit;
  white-space: nowrap;
}
svg { display: block; fill: none; flex: none; }
.defs { position: absolute; width: 0; height: 0; }

.window {
  display: flex;
  flex-direction: column;
  min-height: 100vh;
  background: #f0f0f0;
  border: solid #45454d;
  border-width: 1px 1px 3px;
}

.titlebar { display: flex; align-items: center; height: 30px; padding-left: 8px; background: #fff; }
.app-icon { width: 16px; height: 16px; }
.title { flex: 1; margin: 0 0 0 5px; font-size: 12px; font-weight: 400; line-height: 18px; white-space: nowrap; }
.win-btn { display: grid; place-items: center; width: 46px; height: 30px; }
.win-btn svg { width: 12px; height: 12px; stroke: #000; }

.grip { flex: none; width: 2px; height: 16px; background: repeating-linear-gradient(#bdbdbd 0 2px, transparent 2px 4px); }
.grip.tall { height: 26px; }
.grip.flat { width: 14px; height: 2px; margin: 4px 0; background: repeating-linear-gradient(90deg, #bdbdbd 0 2px, transparent 2px 4px); }

.menubar { display: flex; align-items: center; gap: 18px; height: 39px; padding-left: 6px; border-bottom: 1px solid #8b8d98; font-size: 21px; line-height: 30px; background: linear-gradient(90deg, #f0f0f0, #f6f6f6 60%, #fafafa); }
.menubar .grip { margin-right: -8px; }
.menubar u { text-underline-offset: 2px; text-decoration-thickness: 1px; }

.doc-tabs { display: flex; align-items: flex-end; height: 34px; padding-left: 10px; background: #f0f0f0; border-bottom: 1px solid #8b8d98; }
.doc-tab { position: relative; width: 180px; height: 31px; margin-right: -28px; padding-left: 31px; text-align: left; font-size: 22px; line-height: 30px; }
.doc-tab.active { width: 158px; margin-right: 0; margin-bottom: -1px; padding-left: 32px; font-weight: 700; z-index: 1; }
.doc-tab svg { position: absolute; inset: 0; width: 100%; height: 100%; stroke: #8b8d98; }
.doc-tab span { position: relative; }
.tab-line { flex: 1; }
.tab-ctl { align-self: center; display: grid; place-items: center; width: 14px; height: 14px; }
.tab-ctl:last-child { margin-right: 3px; }
.tab-ctl svg { width: 10px; height: 10px; }

.bars { display: flex; flex-direction: column; align-items: flex-start; padding: 1px 0 0 4px; background: #f5f5f5; }
.toolbar { display: flex; align-items: center; height: 26px; padding: 0 3px; border-radius: 4px; background: linear-gradient(#fbfbfb, #f1f1f1); }
.toolbar > .grip { margin-right: 3px; }
.tool { flex: none; display: grid; place-items: center; width: 22px; height: 22px; }
.tool svg { width: 16px; height: 16px; }
.sep { flex: none; width: 6px; height: 16px; background: linear-gradient(#c0c0c0, #c0c0c0) center / 1px 100% no-repeat; }

.combo { position: relative; height: 22px; border: 1px solid #7a7a7a; background: #fff; }
.combo.layer { width: 250px; }
.combo.color { width: 120px; }
.combo.line { width: 180px; }
.combo select { width: 100%; height: 100%; padding: 0 20px 0 67px; border: 0; background: transparent; appearance: none; color: #000; font: 700 14px/18px "Liberation Sans", "Noto Sans CJK SC", sans-serif; }
.combo.color select { padding-left: 24px; }
.combo.line select { padding-left: 69px; }
.combo-icons { position: absolute; inset: 0 auto 0 2px; display: flex; align-items: center; pointer-events: none; }
.combo .swatch { width: 11px; height: 11px; border: 1px solid #000; margin-left: -6px; }
.combo .swatch.cyan { margin-left: 2px; background: #0ff; }
.sample { width: 62px; height: 1px; background: #000; }
.chev { position: absolute; top: 8px; right: 3px; width: 10px; height: 6px; stroke: #555; pointer-events: none; }

.workspace { flex: 1 0 auto; display: flex; border-top: 1px solid #77777c; }
.sidebar { flex: none; display: flex; flex-direction: column; align-items: center; width: 29px; padding-left: 1px; background: linear-gradient(90deg, #fcfcfc, #f0f0f0); }
.sidebar.right { padding-left: 0; }
.sidebar .sep { width: 16px; height: 6px; background: linear-gradient(#b5b5b5, #b5b5b5) center / 100% 1px no-repeat; }
.letter { font-size: 18px; line-height: 16px; font-family: "Open Sans", sans-serif; }
.letter.barred { display: flex; justify-content: center; align-items: center; }
.textbars { width: 4px; height: 13px; border: solid #222; border-width: 0 1px; }
.center { flex: 1; display: flex; flex-direction: column; min-width: 0; }
.canvas { flex: 1 1 0px; width: 100%; height: 0; min-height: 0; background: #000; }
.star { stroke: #0ff; stroke-width: 3; }
.star-dots { stroke: #104040; stroke-width: 1; stroke-dasharray: 2 2; }
.handles { fill: #0040ff; stroke: #665d50; }
.thin { stroke: #fff; }
.axis { fill: #fff; font: 300 16px "Liberation Sans", sans-serif; }
.scale { fill: #6c6c6c; font: 19px "Liberation Sans", sans-serif; }

.sheet-tabs { display: flex; height: 36px; padding: 1px 0 6px; border-top: 1px solid #8d8d8d; background: #f0f0f0; }
.nav { display: grid; place-items: center; width: 30px; border: 1px solid #9f9f9f; }
.nav + .nav { margin-left: -1px; }
.nav svg { width: 10px; height: 16px; fill: #666; }
.sheet { position: relative; width: 86px; font-size: 21px; line-height: 28px; }
.sheet svg { position: absolute; inset: 0; width: 100%; height: 100%; }
.sheet span { position: relative; }

.command { margin: 0 3px; border-left: 1px solid #777; font: 13px/17px "Noto Sans CJK SC", sans-serif; background: #fff; }
.history { display: flex; height: 35px; border-top: 2px solid #888; border-bottom: 1px solid #999; overflow: hidden; }
.log { flex: 1; padding-left: 2px; }
.log p { margin: 0; height: 16px; line-height: 14px; }
.log .indent { padding-left: 7px; line-height: 17px; }
.vscroll { width: 17px; background: #f0f0f0; display: flex; flex-direction: column; }
.vscroll button { flex: 1; display: grid; place-items: center; }
.vscroll svg { width: 8px; height: 6px; stroke: #555; stroke-width: 2; }
.prompt { position: relative; display: flex; height: 21px; padding: 0 29px 1px 2px; border-bottom: 1px solid #e3e3e3; }
.prompt label { width: 38px; }
.cmd { width: 30px; height: 18px; padding: 0; border: 0; background: transparent; color: #000; font: 13px/18px "Noto Sans CJK SC", sans-serif; }
.cmd:focus { outline: 0; }
.caret { width: 2px; height: 9px; margin-top: 2px; background: #000; }
.hscroll { display: flex; width: 72px; height: 19px; margin-left: auto; background: #f0f0f0; }
.hscroll button { display: grid; place-items: center; width: 16px; }
.hscroll button:last-child { margin-left: auto; width: 20px; }
.hscroll svg { width: 6px; height: 10px; stroke: #444; stroke-width: 2; }
.thumb { width: 17px; height: 16px; margin-top: 1px; background: #cdcdcd; }
.marker { position: absolute; left: 0; top: -8px; width: 95px; height: 36px; border: 3px solid #fc3a3a; pointer-events: none; }

.status { position: relative; display: flex; align-items: center; gap: 2px; height: 29px; padding: 0 4px; font-size: 21px; line-height: 25px; white-space: nowrap; }
.coords { width: 376px; }
.status button { height: 27px; padding: 0 6px 0 2px; border: 1px solid transparent; }
.status button.on { border-color: #0078d7; background: #dcebf7; }
.feedback { padding-left: 2px; color: #00f; text-decoration: none; }
.brand { display: flex; align-items: center; gap: 4px; margin-left: auto; padding-right: 5px; font-size: 13px; line-height: 14px; background: #fff; }
.brand svg { width: 18px; height: 16px; }
.watermark { position: absolute; right: 14px; top: -4px; color: #77777780; font-size: 19px; line-height: 28px; pointer-events: none; }
```
